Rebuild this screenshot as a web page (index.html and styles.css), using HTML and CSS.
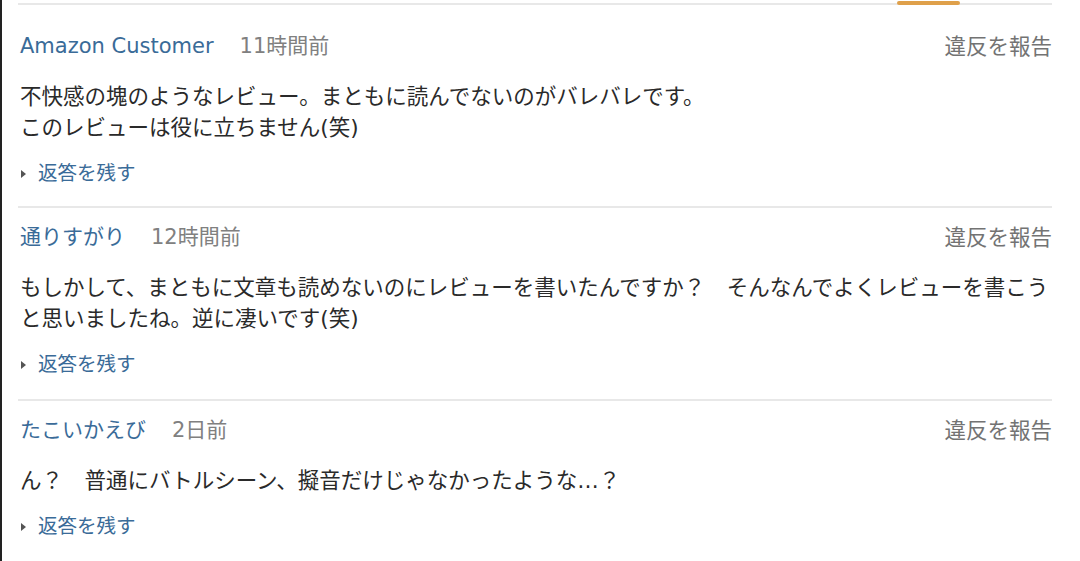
FILE: index.html
```html
<html>

<head>
    <meta charset="UTF-8">
    <title>コメント</title>
    <link rel="stylesheet" href="styles.css">
</head>

<body>
    <div class="frame">
        <div class="tabs">
            <div class="tab-active"></div>
        </div>

        <div class="comment first">
            <div class="comment-head">
                <div class="author">
                    <a class="author-name" href="#">Amazon Customer</a>
                    <span class="posted">11時間前</span>
                </div>
                <a class="report" href="#">違反を報告</a>
            </div>
            <p class="comment-body">不快感の塊のようなレビュー。まともに読んでないのがバレバレです。<br>このレビューは役に立ちません(笑)</p>
            <a class="reply" href="#">返答を残す</a>
        </div>

        <div class="comment">
            <div class="comment-head">
                <div class="author">
                    <a class="author-name" href="#">通りすがり</a>
                    <span class="posted">12時間前</span>
                </div>
                <a class="report" href="#">違反を報告</a>
            </div>
            <p class="comment-body">もしかして、まともに文章も読めないのにレビューを書いたんですか？　そんなんでよくレビューを書こうと思いましたね。逆に凄いです(笑)</p>
            <a class="reply" href="#">返答を残す</a>
        </div>

        <div class="comment">
            <div class="comment-head">
                <div class="author">
                    <a class="author-name" href="#">たこいかえび</a>
                    <span class="posted">2日前</span>
                </div>
                <a class="report" href="#">違反を報告</a>
            </div>
            <p class="comment-body">ん？　普通にバトルシーン、擬音だけじゃなかったような…？</p>
            <a class="reply" href="#">返答を残す</a>
        </div>
    </div>
</body>

</html>
```

FILE: styles.css
```css
body {
    font-family: "DejaVu Sans", "Noto Sans CJK JP", sans-serif;
    margin: 0;
    background-color: #fff;
    color: #333;
}

html {
    box-sizing: border-box;
}

*,
*:before,
*:after {
    box-sizing: inherit;
}

a {
    text-decoration: none;
}

.frame {
    height: 561px;
    overflow: hidden;
    border-left: 2px solid #222;
    padding-left: 16px;
    width: 1052px;
}

.tabs {
    display: flex;
    justify-content: flex-end;
    height: 5px;
    border-bottom: 2px solid #e8e8e8;
}

.tab-active {
    width: 63px;
    height: 4px;
    margin-top: 1px;
    margin-right: 92px;
    border-radius: 2px;
    background-color: #dfa04a;
}

.comment {
    padding: 14px 0 20px 2px;
    border-bottom: 2px solid #e8e8e8;
}

.comment.first {
    padding-top: 26px;
    padding-bottom: 18px;
}

.comment-head {
    display: flex;
    justify-content: space-between;
    align-items: center;
    height: 31px;
    font-size: 21px;
    line-height: 31px;
}

.author {
    display: flex;
    gap: 26px;
}

.author-name {
    color: #3a6b98;
}

.posted {
    color: #808080;
}

.report {
    font-size: 21.5px;
    color: #737373;
}

.comment-body {
    margin: 19px 0 0;
    font-size: 21.5px;
    line-height: 31px;
    color: #2a2a2a;
}

.reply {
    display: flex;
    align-items: center;
    margin-top: 17px;
    height: 28px;
    font-size: 19.5px;
    line-height: 28px;
    color: #3a6b98;
}

.reply::before {
    content: "";
    width: 0;
    height: 0;
    margin: 0 12px 0 1px;
    border-top: 4px solid transparent;
    border-bottom: 4px solid transparent;
    border-left: 5px solid #555;
}
```
